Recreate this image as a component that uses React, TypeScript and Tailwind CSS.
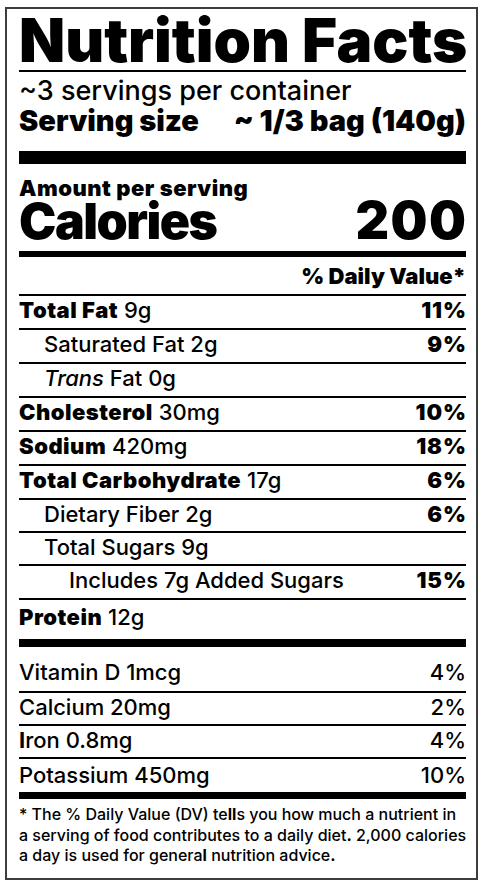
import React from "react";

type Row = {
  label: string;
  amount?: string;
  dv?: string;
  bold?: boolean;
  indent?: 0 | 1 | 2;
  italicPrefix?: string;
  pad?: string;
};

const rows: Row[] = [
  { label: "Total Fat", amount: "9g", dv: "11%", bold: true, pad: "pb-[4px]" },
  { label: "Saturated Fat 2g", dv: "9%", indent: 1, pad: "pb-[4px]" },
  { label: "Fat 0g", italicPrefix: "Trans", indent: 1, pad: "pb-[4px]" },
  { label: "Cholesterol", amount: "30mg", dv: "10%", bold: true, pad: "pb-[4px]" },
  { label: "Sodium", amount: "420mg", dv: "18%", bold: true, pad: "pb-[4px]" },
  { label: "Total Carbohydrate", amount: "17g", dv: "6%", bold: true, pad: "pb-[4px]" },
  { label: "Dietary Fiber 2g", dv: "6%", indent: 1, pad: "pb-[3px]" },
  { label: "Total Sugars 9g", indent: 1, pad: "pb-[3px]" },
  { label: "Includes 7g Added Sugars", dv: "15%", indent: 2, pad: "pb-[4px]" },
];

function NutrientRow({ row }: { row: Row }) {
  const indent = row.indent === 2 ? "pl-[50px]" : row.indent === 1 ? "pl-[25px]" : "";
  return (
    <div className={`flex shrink-0 justify-between border-b-2 border-black text-[22px] leading-[28px] ${row.pad} ${indent}`}>
      <span>
        {row.italicPrefix && <i className="italic">{row.italicPrefix} </i>}
        {row.bold ? <span className="font-black tracking-[0.5px]">{row.label}</span> : row.label}
        {row.amount && <span> {row.amount}</span>}
      </span>
      {row.dv && <span className="-mr-[1px] font-black tracking-[1px]">{row.dv}</span>}
    </div>
  );
}

function VitaminRow({ children, dv, pad }: { children: React.ReactNode; dv: string; pad: string }) {
  return (
    <div className={`flex shrink-0 justify-between border-b-2 border-black text-[22px] leading-[28px] ${pad}`}>
      <span>{children}</span>
      <span>{dv}</span>
    </div>
  );
}

export default function App() {
  return (
    <div className="min-h-[886px] w-[484px] bg-white pl-[5px] pt-[7px] text-black [font-family:Inter,'Liberation_Sans',sans-serif]">
      <div className="box-border flex h-[873px] w-[473px] flex-col border-2 border-[#3d3d3d] pl-[12px] pr-[10px] pt-[1px] font-medium">
        <h1 className="shrink-0 whitespace-nowrap text-[60px] font-black leading-[60px]">Nutrition Facts</h1>
        <div className="h-[2px] shrink-0 bg-black" />
        <p className="mt-[4px] shrink-0 text-[27px] leading-[30px]">~3 servings per container</p>
        <div className="flex shrink-0 justify-between text-[29px] font-black leading-[30px]">
          <span>Serving size</span>
          <span>~ 1/3 bag (140g)</span>
        </div>
        <div className="mt-[15px] h-[13px] shrink-0 bg-black" />
        <p className="mt-[13px] shrink-0 text-[22px] font-black leading-[22px] tracking-[0.5px]">Amount per serving</p>
        <div className="flex shrink-0 items-baseline justify-between font-black leading-[44px]">
          <span className="text-[50px] tracking-[-1.5px]">Calories</span>
          <span className="-mr-[1.5px] text-[52px] tracking-[1.5px]">200</span>
        </div>
        <div className="mt-[8px] h-[6px] shrink-0 bg-black" />
        <div className="shrink-0 border-b-2 border-black pb-[3px] pt-[4px] text-right text-[22px] font-black leading-[30px]">
          % Daily Value*
        </div>
        {rows.map((r) => (
          <NutrientRow key={r.label} row={r} />
        ))}
        <div className="shrink-0 pb-[8px] pt-[3px] text-[22px] leading-[28px]">
          <span className="font-black tracking-[0.5px]">Protein</span> 12g
        </div>
        <div className="h-[8px] shrink-0 bg-black" />
        <VitaminRow dv="4%" pad="pt-[11px] pb-[5px]">Vitamin D 1mcg</VitaminRow>
        <VitaminRow dv="2%" pad="pb-[3px]">Calcium 20mg</VitaminRow>
        <VitaminRow dv="4%" pad="pb-[3px]">
          <span className="font-bold">I</span>ron 0.8mg
        </VitaminRow>
        <div className="flex shrink-0 justify-between pb-[3px] pt-[2px] text-[22px] leading-[28px]">
          <span>Potassium 450mg</span>
          <span>10%</span>
        </div>
        <div className="h-[7px] shrink-0 bg-black" />
        <p className="shrink-0 whitespace-nowrap pt-[5px] text-[16px] leading-[20.5px]">
          * The % Daily Value (DV) te<span className="font-bold">ll</span>s you how much a nutrient in
          <br />
          a serving of food contributes to a daily diet<span className="font-bold">.</span> 2,000 calories
          <br />
          a day is used for genera<span className="font-bold">l</span> nutrition advice<span className="font-bold">.</span>
        </p>
      </div>
    </div>
  );
}
